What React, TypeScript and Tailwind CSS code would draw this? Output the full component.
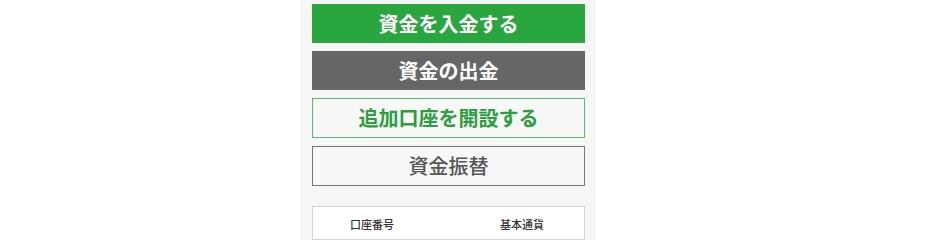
const jp = "font-['Noto_Sans_CJK_JP','Noto_Sans',sans-serif]";

export default function App() {
  return (
    <div className={`w-[930px] h-[240px] bg-white overflow-hidden flex justify-center ${jp}`}>
      <div className="w-[296px] ml-[-34px] bg-[#f6f6f6] pl-3 pr-[11px] pt-1 flex flex-col">
        <div className="flex flex-col gap-2">
          <button className="h-[39px] w-full bg-[#2aa63f] text-white text-[20px] font-bold leading-none">
            資金を入金する
          </button>
          <button className="h-[39px] w-full bg-[#666666] text-white text-[20px] font-bold leading-none">
            資金の出金
          </button>
          <button className="h-[40px] w-full bg-[#f7f7f7] border border-[#5cba6c] text-[#2a9f3d] text-[20px] font-bold leading-none">
            追加口座を開設する
          </button>
          <button className="h-[40px] w-full bg-[#f7f7f7] border border-[#777777] text-[#555555] text-[20px] font-medium leading-none">
            資金振替
          </button>
        </div>
        <div className="mt-5 h-[40px] bg-white border border-[#d4d4d4] flex items-start pt-[9px] pl-[37px] text-[11px] font-medium text-[#333333]">
          <div className="w-[150px]">口座番号</div>
          <div>基本通貨</div>
        </div>
      </div>
    </div>
  );
}
